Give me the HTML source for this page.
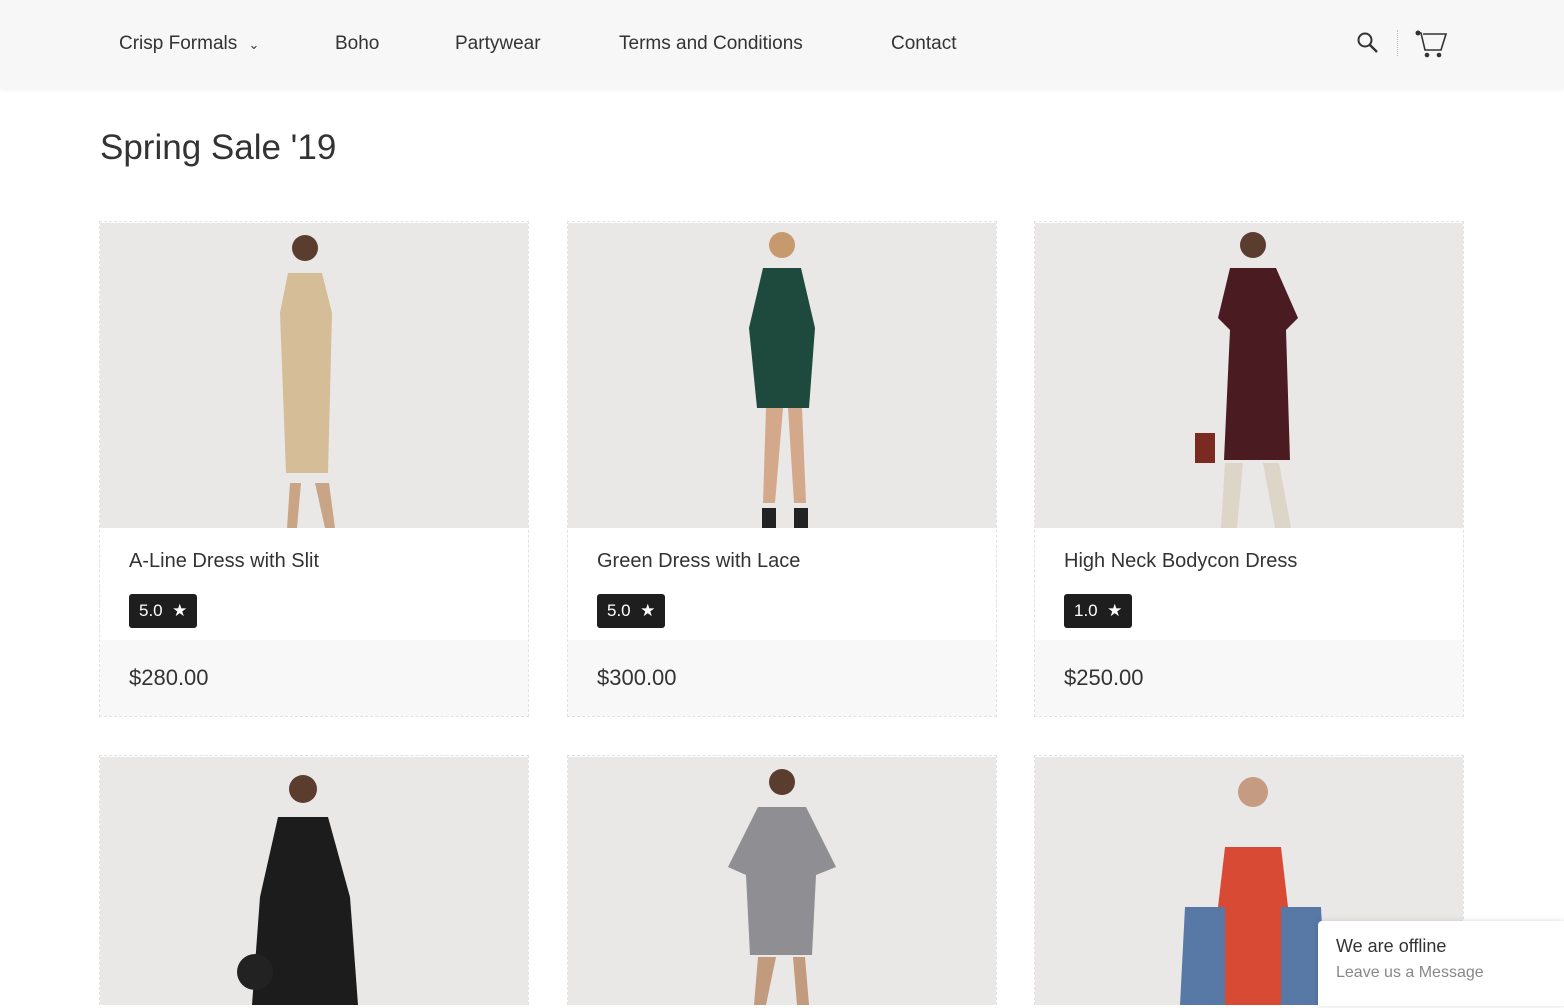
<!DOCTYPE html>
<html><head><meta charset="utf-8"><style>
*{margin:0;padding:0;box-sizing:border-box}
html,body{width:1564px;height:1008px;overflow:hidden}
body{background:#fff;font-family:"Liberation Sans",sans-serif;color:#333;position:relative}
.nav{position:absolute;left:0;top:0;width:1564px;height:88px;background:#f7f7f7;box-shadow:0 2px 4px rgba(0,0,0,.05)}
.nav a{position:absolute;top:33px;font-size:19px;color:#333;text-decoration:none}
h1{position:absolute;left:100px;top:128px;font-size:35px;font-weight:normal;color:#333}
.card{position:absolute;width:430px;height:496px;border:1px dashed #e2e2e2}
.img{position:absolute;left:0;top:1px;width:428px;height:305px;background:#e9e8e6;overflow:hidden}
.t{position:absolute;left:29px;top:328px;font-size:20px;color:#333}
.b{position:absolute;left:29px;top:372px;height:34px;background:#1e1e1e;color:#fff;border-radius:3px;font-size:17px;padding:7px 10px 0 10px}
.p{position:absolute;left:0;top:418px;width:428px;height:76px;background:#f8f8f8;font-size:22px;padding:25px 29px;color:#333}
.chat{position:absolute;left:1318px;top:921px;width:246px;height:85px;background:#fff;box-shadow:0 0 6px rgba(0,0,0,.15);border-radius:4px 0 0 0;padding:15px 18px}
</style></head><body>
<div class="nav">
<a style="left:119px">Crisp Formals <span style="font-size:13px;display:inline-block;margin-left:6px">&#8964;</span></a>
<a style="left:335px">Boho</a><a style="left:455px">Partywear</a><a style="left:619px">Terms and Conditions</a><a style="left:891px">Contact</a>
<svg style="position:absolute;left:1356px;top:31px" width="24" height="24" viewBox="0 0 24 24"><circle cx="9" cy="9" r="6.5" fill="none" stroke="#333" stroke-width="2"/><path d="M14 14l7 7" stroke="#333" stroke-width="2.4"/></svg>
<div style="position:absolute;left:1397px;top:30px;height:26px;border-left:1px dotted #bbb"></div>
<svg style="position:absolute;left:1415px;top:30px" width="34" height="28" viewBox="0 0 34 28"><circle cx="3" cy="3" r="2.5" fill="#333"/><path d="M3 3h3l4 17h16l5-16H8" fill="none" stroke="#333" stroke-width="1.6"/><circle cx="12" cy="25" r="2.3" fill="#333"/><circle cx="24" cy="25" r="2.3" fill="#333"/></svg>
</div>
<h1>Spring Sale '19</h1>

<div class="card" style="left:99px;top:221px"><div class="img"><svg width="428" height="305"><circle cx="205" cy="25" r="13" fill="#5a3d2e"/><path d="M188 50h34l10 40 -4 160 -42 0 -6-160z" fill="#d5bd98"/><path d="M190 260l-3 45h10l4-45zM215 260l10 45h10l-6-45z" fill="#c9a586"/></svg></div>
<div class="t">A-Line Dress with Slit</div><div class="b">5.0 &nbsp;★</div><div class="p">$280.00</div></div>
<div class="card" style="left:567px;top:221px"><div class="img"><svg width="428" height="305"><circle cx="214" cy="22" r="13" fill="#c79a6e"/><path d="M195 45h38l14 60-6 80-52 0-8-80z" fill="#1e4a3d"/><path d="M198 185l-3 95h12l8-95zM220 185l6 95h12l-4-95z" fill="#d4a88a"/><path d="M194 285h14v20h-14zM226 285h14v20h-14z" fill="#222"/></svg></div>
<div class="t">Green Dress with Lace</div><div class="b">5.0 &nbsp;★</div><div class="p">$300.00</div></div>
<div class="card" style="left:1034px;top:221px"><div class="img"><svg width="428" height="305"><circle cx="218" cy="22" r="13" fill="#5a3d2e"/><path d="M195 45h46l22 50-12 12 4 130h-66l6-130-12-12z" fill="#4a1c22"/><path d="M190 240l-4 65h16l6-65zM228 240l12 65h16l-12-65z" fill="#ddd5c8"/><rect x="160" y="210" width="20" height="30" fill="#7a2a1e"/></svg></div>
<div class="t">High Neck Bodycon Dress</div><div class="b">1.0 &nbsp;★</div><div class="p">$250.00</div></div>

<div class="card" style="left:99px;top:755px;height:250px"><div class="img" style="height:248px"><svg width="428" height="248"><circle cx="203" cy="32" r="14" fill="#5a3d2e"/><path d="M178 60h50l22 80 8 108h-106l8-108z" fill="#1c1c1c"/><circle cx="155" cy="215" r="18" fill="#222"/></svg></div></div>
<div class="card" style="left:567px;top:755px;height:250px"><div class="img" style="height:248px"><svg width="428" height="248"><circle cx="214" cy="25" r="13" fill="#5a3d2e"/><path d="M190 50h48l30 60-20 8 -4 80h-62l-4-80-18-8z" fill="#8e8e93"/><path d="M190 200l-4 48h12l10-48zM225 200l4 48h12l-4-48z" fill="#c29a7d"/></svg></div></div>
<div class="card" style="left:1034px;top:755px;height:250px"><div class="img" style="height:248px"><svg width="428" height="248"><circle cx="218" cy="35" r="15" fill="#c59c82"/><path d="M190 90h56l14 120v38h-84v-38z" fill="#d94a35"/><path d="M150 150h40v98h-45zM246 150h40l5 98h-45z" fill="#5879a6"/></svg></div></div>

<div class="chat"><div style="font-size:18px;color:#333">We are offline</div><div style="font-size:16px;color:#888;margin-top:7px">Leave us a Message</div></div>
</body></html>
